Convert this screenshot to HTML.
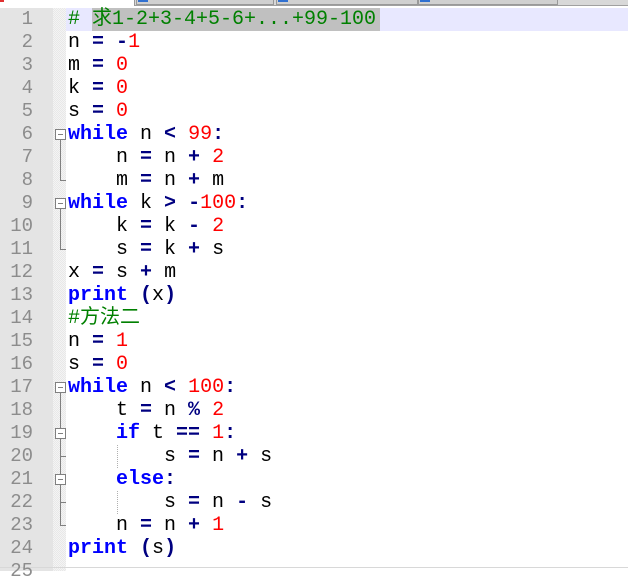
<!DOCTYPE html>
<html><head><meta charset="utf-8"><style>
html,body{margin:0;padding:0;width:628px;height:571px;overflow:hidden;background:#fff;}
.gut{position:absolute;left:0;top:8px;width:53px;height:563px;background:#e4e4e4;}
.fold{position:absolute;left:53px;top:8px;width:13px;height:563px;background-color:#f4f4f4;
background-image:linear-gradient(45deg,#e8e8e8 25%,transparent 25%,transparent 75%,#e8e8e8 75%),linear-gradient(45deg,#e8e8e8 25%,transparent 25%,transparent 75%,#e8e8e8 75%);
background-size:2px 2px;background-position:0 0,1px 1px;}
.num{position:absolute;left:0;width:33px;text-align:right;font:19px "Liberation Mono",monospace;line-height:23px;color:#8c8c8c;height:23px;overflow:hidden;}
.ln{position:absolute;left:68px;height:23px;font:20px "Liberation Mono","Noto Sans CJK SC",monospace;line-height:23px;white-space:pre;color:#000;overflow:visible;}
.k{color:#0000ff;font-weight:bold}.o{color:#000080;font-weight:bold}.n{color:#ff0000}.c{color:#008000}
.box{position:absolute;left:55px;width:9px;height:9px;border:1px solid #808080;background:#fff;}
.box:after{content:"";position:absolute;left:2px;top:4px;width:5px;height:1px;background:#808080;}
.vl{position:absolute;left:60px;width:1px;background:#808080;}
.hl{position:absolute;left:60px;height:1px;width:6px;background:#808080;}
.dot{position:absolute;left:117px;width:0;border-left:1px dotted #b0b0b0;}
</style></head><body>
<div style="position:absolute;left:0;top:0;width:628px;height:5px;background:#d8d8d8;border-bottom:1px solid #a0a0a0"></div>
<div style="position:absolute;left:0;top:0;width:134px;height:6px;background:#fff;border-right:1px solid #999"></div>
<div style="position:absolute;left:0;top:0;width:4px;height:2px;background:#e03030"></div>
<div style="position:absolute;left:136px;top:0;width:136px;height:4px;background:#d0d0d0;border:1px solid #999;border-top:0"></div>
<div style="position:absolute;left:138px;top:0;width:10px;height:2px;background:#3070d0"></div>
<div style="position:absolute;left:276px;top:0;width:140px;height:4px;background:#d0d0d0;border:1px solid #999;border-top:0"></div>
<div style="position:absolute;left:278px;top:0;width:10px;height:2px;background:#3070d0"></div>
<div style="position:absolute;left:418px;top:0;width:138px;height:4px;background:#d0d0d0;border:1px solid #999;border-top:0"></div>
<div style="position:absolute;left:420px;top:0;width:10px;height:2px;background:#3070d0"></div>
<div class="gut"></div><div class="fold"></div>
<div style="position:absolute;left:66px;top:8px;width:562px;height:23px;background:#e8e8ff"></div>
<div style="position:absolute;left:92px;top:8px;width:288px;height:23px;background:#c0c0c0"></div>
<div style="position:absolute;left:0;top:567px;width:628px;height:1px;background:#d8d8d8"></div>

<div class="num" style="top:8px">1</div><div class="num" style="top:31px">2</div><div class="num" style="top:54px">3</div><div class="num" style="top:77px">4</div><div class="num" style="top:100px">5</div><div class="num" style="top:123px">6</div><div class="num" style="top:146px">7</div><div class="num" style="top:169px">8</div><div class="num" style="top:192px">9</div><div class="num" style="top:215px">10</div><div class="num" style="top:238px">11</div><div class="num" style="top:261px">12</div><div class="num" style="top:284px">13</div><div class="num" style="top:307px">14</div><div class="num" style="top:330px">15</div><div class="num" style="top:353px">16</div><div class="num" style="top:376px">17</div><div class="num" style="top:399px">18</div><div class="num" style="top:422px">19</div><div class="num" style="top:445px">20</div><div class="num" style="top:468px">21</div><div class="num" style="top:491px">22</div><div class="num" style="top:514px">23</div><div class="num" style="top:537px">24</div><div class="num" style="top:560px">25</div>

<div class="vl" style="top:140px;height:40px"></div><div class="hl" style="top:180px"></div>
<div class="vl" style="top:209px;height:40px"></div><div class="hl" style="top:249px"></div>
<div class="vl" style="top:393px;height:132px"></div><div class="hl" style="top:525px"></div>
<div class="hl" style="top:456px"></div><div class="hl" style="top:502px"></div>
<div class="box" style="top:129px"></div><div class="box" style="top:198px"></div>
<div class="box" style="top:382px"></div><div class="box" style="top:428px"></div><div class="box" style="top:474px"></div>
<div class="dot" style="top:445px;height:23px"></div><div class="dot" style="top:491px;height:23px"></div>

<div class="ln c" style="top:8px"># 求1-2+3-4+5-6+...+99-100</div>
<div class="ln" style="top:31px">n <span class="o">=</span> <span class="o">-</span><span class="n">1</span></div>
<div class="ln" style="top:54px">m <span class="o">=</span> <span class="n">0</span></div>
<div class="ln" style="top:77px">k <span class="o">=</span> <span class="n">0</span></div>
<div class="ln" style="top:100px">s <span class="o">=</span> <span class="n">0</span></div>
<div class="ln" style="top:123px"><span class="k">while</span> n <span class="o">&lt;</span> <span class="n">99</span><span class="o">:</span></div>
<div class="ln" style="top:146px">    n <span class="o">=</span> n <span class="o">+</span> <span class="n">2</span></div>
<div class="ln" style="top:169px">    m <span class="o">=</span> n <span class="o">+</span> m</div>
<div class="ln" style="top:192px"><span class="k">while</span> k <span class="o">&gt;</span> <span class="o">-</span><span class="n">100</span><span class="o">:</span></div>
<div class="ln" style="top:215px">    k <span class="o">=</span> k <span class="o">-</span> <span class="n">2</span></div>
<div class="ln" style="top:238px">    s <span class="o">=</span> k <span class="o">+</span> s</div>
<div class="ln" style="top:261px">x <span class="o">=</span> s <span class="o">+</span> m</div>
<div class="ln" style="top:284px"><span class="k">print</span> <span class="o">(</span>x<span class="o">)</span></div>
<div class="ln c" style="top:307px">#方法二</div>
<div class="ln" style="top:330px">n <span class="o">=</span> <span class="n">1</span></div>
<div class="ln" style="top:353px">s <span class="o">=</span> <span class="n">0</span></div>
<div class="ln" style="top:376px"><span class="k">while</span> n <span class="o">&lt;</span> <span class="n">100</span><span class="o">:</span></div>
<div class="ln" style="top:399px">    t <span class="o">=</span> n <span class="o">%</span> <span class="n">2</span></div>
<div class="ln" style="top:422px">    <span class="k">if</span> t <span class="o">==</span> <span class="n">1</span><span class="o">:</span></div>
<div class="ln" style="top:445px">        s <span class="o">=</span> n <span class="o">+</span> s</div>
<div class="ln" style="top:468px">    <span class="k">else</span><span class="o">:</span></div>
<div class="ln" style="top:491px">        s <span class="o">=</span> n <span class="o">-</span> s</div>
<div class="ln" style="top:514px">    n <span class="o">=</span> n <span class="o">+</span> <span class="n">1</span></div>
<div class="ln" style="top:537px"><span class="k">print</span> <span class="o">(</span>s<span class="o">)</span></div>
</body></html>
